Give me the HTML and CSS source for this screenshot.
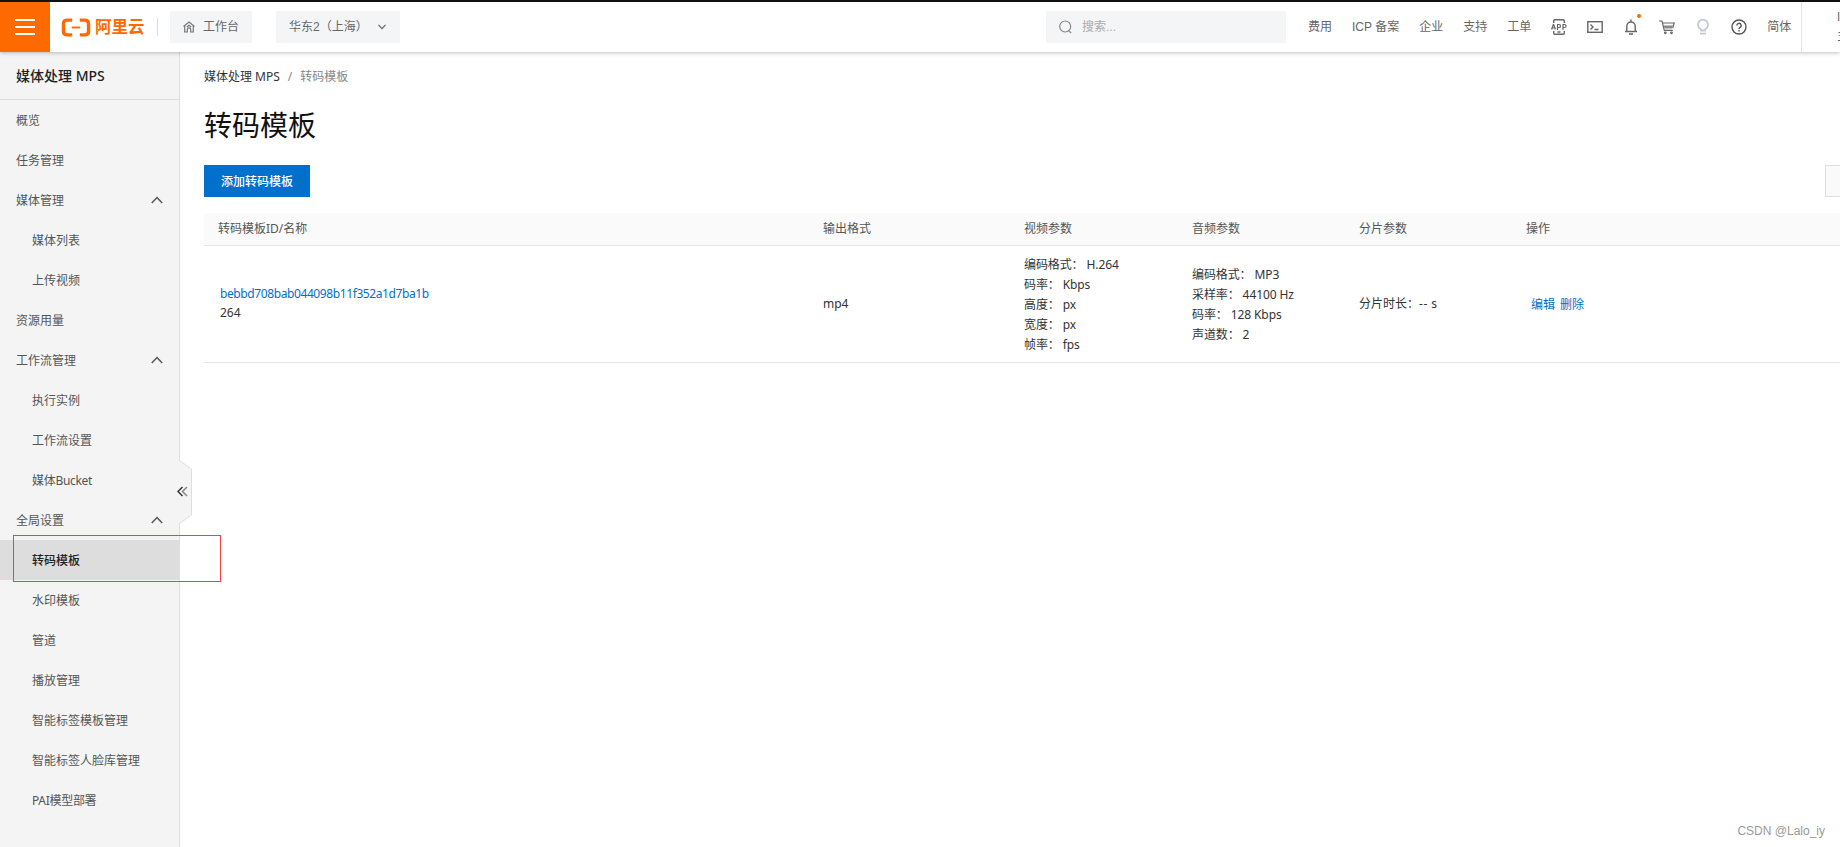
FILE: index.html
```html
<!DOCTYPE html>
<html lang="zh-CN">
<head>
  <meta charset="UTF-8">
  <meta name="viewport" content="width=device-width, initial-scale=1.0">
  <title>转码模板 - 媒体处理 MPS</title>
  <link rel="stylesheet" href="styles.css">
</head>
<body>
  <header class="topbar">
    <div class="menu-btn"><i></i><i></i><i></i></div>
    <div class="logo">
      <svg width="30" height="20" viewBox="0 0 30 20" fill="none" stroke="#ff6a00" stroke-width="3.6">
        <path d="M11 2.200H6Q1.800 2.200 1.800 6v8Q1.800 17.800 6 17.800h5M19 2.200h5Q28.200 2.200 28.200 6v8Q28.200 17.800 24 17.800h-5"/>
        <path d="M10.500 10h9" stroke-width="2"/>
      </svg>
      <span>阿里云</span>
    </div>
    <div class="split"></div>
    <div class="tab workbench">
      <svg width="12" height="12" viewBox="0 0 12 12" fill="none" stroke="#777" stroke-width="1.2">
        <path d="M.5 5.500L6 1l5.500 4.500M1.700 4.800V11h2.600V8.500a1.700 1.700 0 0 1 3.400 0V11h2.600V4.800M3.800 6L6 4.200 8.200 6"/>
      </svg>
      <span>工作台</span>
    </div>
    <div class="tab region">
      <span>华东2（上海）</span>
      <svg width="8" height="6" viewBox="0 0 8 6" fill="none" stroke="#666" stroke-width="1.2"><path d="M.5.8L4 4.700 7.500.8"/></svg>
    </div>
    <div class="search">
      <svg width="13" height="14" viewBox="0 0 13 14" fill="none" stroke="#888" stroke-width="1.2"><circle cx="6.200" cy="6.500" r="5.500"/><path d="M9.500 10.500l2.700 2.700"/></svg>
      <span>搜索...</span>
    </div>
    <nav class="links">
      <a>费用</a><a>ICP 备案</a><a>企业</a><a>支持</a><a>工单</a>
    </nav>
    <div class="icons">
      <svg width="16" height="16" viewBox="0 0 16 16" fill="none" stroke="#666" stroke-width="1.4">
        <path d="M2.700 4V2q0-1.200 1.200-1.200h8.200q1.200 0 1.200 1.200v2M2.700 12v2q0 1.200 1.200 1.200h8.200q1.200 0 1.200-1.200v-2M6.500 13h3"/>
        <path d="M.6 10.500L2.300 5.500h.4l1.700 5M1.200 9h2.600M6.500 11V5.500h1.600q1.400 0 1.400 1.500T8.100 8.500H6.500M12 11V5.500h1.600q1.400 0 1.400 1.500t-1.400 1.500H12" stroke-width="1.2"/>
      </svg>
      <svg width="16" height="16" viewBox="0 0 16 16" fill="none" stroke="#666" stroke-width="1.4">
        <rect x=".8" y="2.700" width="14.400" height="10.600"/><path d="M3.500 5.500L6 8l-2.500 2.500M7.500 10.500h4"/>
      </svg>
      <span class="bell">
        <svg width="16" height="16" viewBox="0 0 16 16" fill="none" stroke="#666" stroke-width="1.4">
          <path d="M2 12.500h12M3.800 12.300V7.200a4.200 4.200 0 0 1 8.400 0v5.100M8 .5v2M6 15h4"/>
        </svg>
      </span>
      <svg width="16" height="16" viewBox="0 0 16 16" fill="none" stroke="#666" stroke-width="1.2">
        <path d="M0 2h3l2.300 9.400h8.500M3.400 4h11.800l-1.500 5"/><path d="M4.800 6.500h9.200l-.8 3H5.500z" fill="#888" stroke="none"/>
        <circle cx="6.300" cy="13.800" r=".8"/><circle cx="12.500" cy="13.800" r=".8"/>
      </svg>
      <svg width="16" height="16" viewBox="0 0 16 16" fill="none" stroke="#c3c9d3" stroke-width="1.8">
        <path d="M6 11.500V10.300a5 5 0 1 1 4 0v1.200zM5 14.700h6"/>
      </svg>
      <svg width="16" height="16" viewBox="0 0 16 16" fill="none" stroke="#555" stroke-width="1.4">
        <circle cx="8" cy="8" r="7"/><path d="M5.800 6.500a2.200 2.200 0 1 1 3.300 1.900Q8 9 8 10M8 11v1.500"/>
      </svg>
    </div>
    <a class="lang">简体</a>
    <div class="account"><span>l</span><span>主</span></div>
  </header>

  <div class="page">
    <aside class="sidebar">
      <h2>媒体处理 MPS</h2>
      <ul>
        <li>概览</li>
        <li>任务管理</li>
        <li class="group">媒体管理 <svg class="caret" viewBox="0 0 12 8"><path d="M.8 7L6 1.500 11.200 7"/></svg></li>
        <li class="sub">媒体列表</li>
        <li class="sub">上传视频</li>
        <li>资源用量</li>
        <li class="group">工作流管理 <svg class="caret" viewBox="0 0 12 8"><path d="M.8 7L6 1.500 11.200 7"/></svg></li>
        <li class="sub">执行实例</li>
        <li class="sub">工作流设置</li>
        <li class="sub latin">媒体Bucket</li>
        <li class="group">全局设置 <svg class="caret" viewBox="0 0 12 8"><path d="M.8 7L6 1.500 11.200 7"/></svg></li>
        <li class="sub active">转码模板</li>
        <li class="sub">水印模板</li>
        <li class="sub">管道</li>
        <li class="sub">播放管理</li>
        <li class="sub">智能标签模板管理</li>
        <li class="sub">智能标签人脸库管理</li>
        <li class="sub latin">PAI模型部署</li>
      </ul>
      <svg class="collapse" width="16" height="66" viewBox="0 0 16 66" fill="none">
        <path d="M1 1.500H2.500L14.500 10V56L2.500 64.500H1z" fill="#f4f4f4"/>
        <path d="M2.500 1.500L14.500 10V56L2.500 64.500" stroke="#dedede"/>
        <path d="M5.500 28L1 32.500 5.500 37" stroke="#333" stroke-width="1.5"/>
        <path d="M10 28L5.500 32.500 10 37" stroke="#888" stroke-width="1.5"/>
      </svg>
    </aside>

    <main class="content">
      <div class="crumbs"><span>媒体处理 MPS</span><i>/</i><em>转码模板</em></div>
      <h1>转码模板</h1>
      <div class="toolbar">
        <button class="add-btn">添加转码模板</button>
        <button class="refresh-btn"></button>
      </div>
      <div class="table">
        <div class="row head">
          <div>转码模板ID/名称</div>
          <div>输出格式</div>
          <div>视频参数</div>
          <div>音频参数</div>
          <div>分片参数</div>
          <div>操作</div>
        </div>
        <div class="row">
          <div class="name"><a>bebbd708bab044098b11f352a1d7ba1b</a><span>264</span></div>
          <div>mp4</div>
          <div class="params">编码格式： H.264<br>码率： Kbps<br>高度： px<br>宽度： px<br>帧率： fps</div>
          <div class="params">编码格式： MP3<br>采样率： 44100 Hz<br>码率： 128 Kbps<br>声道数： 2</div>
          <div>分片时长：<span class="dash">--</span> s</div>
          <div class="ops"><a>编辑</a><a>删除</a></div>
        </div>
      </div>
    </main>
  </div>

  <div class="mark-box"></div>
  <div class="watermark">CSDN @Lalo_iy</div>
</body>
</html>
```
FILE: styles.css
```css
* {
  box-sizing: border-box;
}
body {
  margin: 0;
  width: 1840px;
  height: 847px;
  overflow: hidden;
  font-family: "Noto Sans", "Noto Sans CJK SC", sans-serif;
  font-size: 12px;
  color: #333;
  background: #fff;
}
svg {
  display: block;
  flex: none;
}
.topbar {
  position: relative;
  z-index: 2;
  display: flex;
  align-items: center;
  height: 52px;
  border-top: 2px solid #111;
  background: #fff;
  box-shadow: 0 1px 4px rgba(0, 0, 0, 0.25);
  font-family: "Liberation Sans", "Noto Sans CJK SC", sans-serif;
  line-height: 16px;
  color: #666;
  white-space: nowrap;
}
.topbar > * {
  flex: none;
}
.menu-btn {
  display: flex;
  flex-direction: column;
  justify-content: center;
  align-items: center;
  gap: 5px;
  width: 50px;
  height: 50px;
  background: #ff6a00;
}
.menu-btn i {
  width: 20px;
  height: 2px;
  background: #fff;
}
.logo {
  display: flex;
  align-items: center;
  gap: 4px;
  width: 107px;
  padding-left: 11px;
  color: #ff6a00;
  font-size: 16.5px;
  font-weight: bold;
}
.logo svg {
  height: 19px;
}
.split {
  width: 1px;
  height: 18px;
  background: #ddd;
}
.tab {
  display: flex;
  align-items: center;
  height: 32px;
  padding: 0 13px;
  background: #f4f5f7;
}
.workbench {
  gap: 8px;
  width: 82px;
  margin-left: 12px;
}
.region {
  justify-content: space-between;
  width: 124px;
  margin-left: 24px;
  padding-right: 14px;
}
.search {
  display: flex;
  align-items: center;
  gap: 10px;
  width: 240px;
  height: 32px;
  margin-left: 646px;
  padding-left: 13px;
  background: #f4f5f7;
  color: #aaa;
}
.links {
  display: flex;
  gap: 20px;
  margin-left: 22px;
}
.icons {
  display: flex;
  gap: 20px;
  margin-left: 20px;
}
.bell {
  position: relative;
}
.bell::after {
  content: "";
  position: absolute;
  top: -5px;
  right: -2px;
  width: 4px;
  height: 4px;
  border-radius: 50%;
  background: #ff6a00;
}
.lang {
  margin-left: 20px;
}
.account {
  display: flex;
  flex-direction: column;
  justify-content: center;
  height: 50px;
  margin-left: 10px;
  padding-left: 35px;
  border-left: 1px solid #e3e4e6;
  line-height: 19px;
}
.page {
  display: flex;
  height: 795px;
}
.sidebar {
  position: relative;
  flex: none;
  width: 180px;
  background: #f4f4f4;
  border-right: 1px solid #dedede;
}
.sidebar h2 {
  height: 48px;
  margin: 0;
  padding-left: 16px;
  border-bottom: 1px solid #dedede;
  font-size: 14px;
  font-weight: 500;
  line-height: 48px;
  color: #222;
}
.sidebar ul {
  margin: 0;
  padding: 0;
  list-style: none;
}
.sidebar li {
  height: 40px;
  padding-left: 16px;
  line-height: 41px;
  color: #555;
}
.sidebar .group {
  display: flex;
  align-items: center;
  justify-content: space-between;
  padding-right: 16px;
}
.sidebar .sub {
  padding-left: 32px;
}
.sidebar .latin {
  letter-spacing: -0.3px;
}
.sidebar .active {
  background: #ddd;
  color: #222;
  font-weight: 500;
}
.caret {
  width: 12px;
  height: 8px;
  fill: none;
  stroke: #555;
  stroke-width: 1.5;
}
.collapse {
  position: absolute;
  top: 407px;
  right: -14px;
}
.content {
  flex: 1;
  min-width: 0;
  padding-left: 24px;
}
.crumbs {
  display: flex;
  height: 48px;
  line-height: 49px;
}
.crumbs i, .crumbs em {
  font-style: normal;
  color: #888;
}
.crumbs i {
  margin: 0 8px;
}
h1 {
  height: 65px;
  margin: 0;
  font-size: 28px;
  font-weight: 400;
  line-height: 50px;
  color: #111;
}
.toolbar {
  display: flex;
  justify-content: space-between;
}
.add-btn {
  width: 106px;
  height: 32px;
  border: 0;
  padding: 0 0 1px;
  background: #0070cc;
  color: #fff;
  font: 500 12px "Noto Sans CJK SC", sans-serif;
}
.refresh-btn {
  width: 32px;
  height: 32px;
  margin-right: -17px;
  border: 1px solid #dedede;
  background: #fafafa;
}
.table {
  margin-top: 16px;
}
.row {
  display: grid;
  grid-template-columns: 605px 201px 168px 167px 167px 1fr;
  align-items: center;
  height: 117px;
  border-bottom: 1px solid #e5e5e5;
  line-height: 20px;
}
.row > div {
  padding-left: 14px;
}
.head {
  height: 33px;
  background: #fafafa;
  color: #555;
}
.row .params {
  padding-top: 2px;
  letter-spacing: -0.1px;
}
.dash {
  letter-spacing: 0.7px;
}
.row .name {
  display: flex;
  flex-direction: column;
  padding-left: 16px;
  padding-bottom: 2px;
  line-height: 19px;
}
.name a {
  letter-spacing: -0.4px;
}
.row a {
  color: #0070cc;
}
.row .ops {
  display: flex;
  gap: 5px;
  padding-top: 2px;
  padding-left: 19px;
}
/* red frame around the selected entry */
.mark-box {
  position: absolute;
  z-index: 3;
  left: 13px;
  top: 535px;
  width: 208px;
  height: 47px;
  border: 1px solid #f8403b;
}
.watermark {
  position: absolute;
  right: 15px;
  bottom: 9px;
  font: 12px "Liberation Sans", sans-serif;
  color: #999;
}
```
